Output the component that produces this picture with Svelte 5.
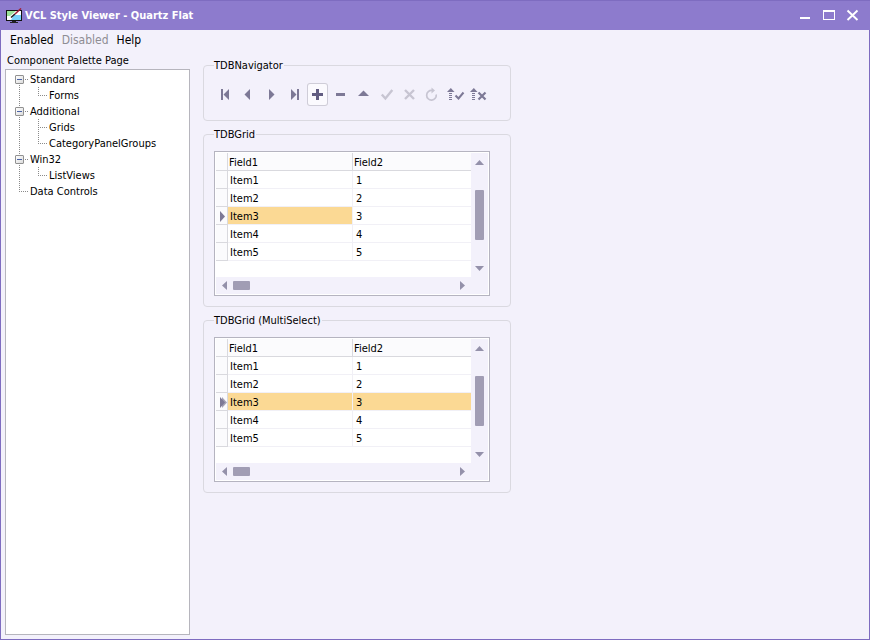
<script>
  const records = [1, 2, 3, 4, 5].map((n) => ({ name: `Item${n}`, value: n }));

  const tree = [
    { label: 'Standard', children: ['Forms'] },
    { label: 'Additional', children: ['Grids', 'CategoryPanelGroups'] },
    { label: 'Win32', children: ['ListViews'] },
    { label: 'Data Controls', children: [] }
  ];
  let collapsed = $state({});

  const grids = [
    { title: 'TDBGrid', multi: false },
    { title: 'TDBGrid (MultiSelect)', multi: true }
  ];
  let current = $state([3, 3]);

  const navButtons = [
    { id: 'first', label: 'First record' },
    { id: 'prior', label: 'Prior record' },
    { id: 'next', label: 'Next record' },
    { id: 'last', label: 'Last record' },
    { id: 'insert', label: 'Insert record' },
    { id: 'delete', label: 'Delete record' },
    { id: 'edit', label: 'Edit record' },
    { id: 'post', label: 'Post edit', disabled: true },
    { id: 'cancel', label: 'Cancel edit', disabled: true },
    { id: 'refresh', label: 'Refresh data', disabled: true },
    { id: 'apply', label: 'Apply updates' },
    { id: 'revert', label: 'Cancel updates' }
  ];
</script>

{#snippet navIcon(id)}
  <svg width="23" height="23" viewBox="0 0 23 23" fill="currentColor" aria-hidden="true">
    {#if id === 'first'}
      <path d="M7 6h2v11H7zM15 6v11l-5.500-5.500z" />
    {:else if id === 'prior'}
      <path d="M13 6v11l-5.500-5.500z" />
    {:else if id === 'next'}
      <path d="M9 6v11l5.500-5.500z" />
    {:else if id === 'last'}
      <path d="M8 6v11l5.500-5.500zM14 6h2v11h-2z" />
    {:else if id === 'insert'}
      <path d="M10 6h3v4h4v3h-4v4h-3v-4H6v-3h4z" />
    {:else if id === 'delete'}
      <path d="M7 10h9v3H7z" />
    {:else if id === 'edit'}
      <path d="M6 13h11l-5.500-5.500z" />
    {:else if id === 'post'}
      <path d="M6.800 11.500l3.600 4L17.300 7" fill="none" stroke="currentColor" stroke-width="2.400" />
    {:else if id === 'cancel'}
      <path d="M7 7l9 9M16 7l-9 9" fill="none" stroke="currentColor" stroke-width="2.400" />
    {:else if id === 'refresh'}
      <path d="M11 7.500a4.800 4.800 0 1 0 4.200 4" fill="none" stroke="currentColor" stroke-width="1.700" />
      <path d="M10.500 4.500v6l3.500-3z" />
    {:else}
      <path d="M3 9h7.500L6.800 5z" />
      <path d="M5 10h3v1H5zM5 12h3v1H5zM5 14h3v1H5zM5 16h3v1H5z" />
      {#if id === 'apply'}
        <path d="M11.500 12.500l3 3 5-6" fill="none" stroke="currentColor" stroke-width="2" />
      {:else}
        <path d="M11.500 9.500l7 7M18.500 9.500l-7 7" fill="none" stroke="currentColor" stroke-width="2.200" />
      {/if}
    {/if}
  </svg>
{/snippet}

<div class="window">
  <header class="titlebar">
    <svg class="app-icon" width="17" height="16" viewBox="0 0 17 16" aria-hidden="true">
      <path d="M0 2h16v11H0z" fill="#111" />
      <path d="M1 3h14v9H1z" fill="#fff" />
      <path d="M1 3h9L4 8H1z" fill="#9be39a" />
      <path d="M8 7h7v5H5z" fill="#78d3fa" />
      <path d="M1 8h5l-2 4H1z" fill="#fff" />
      <path d="M6 13h4v1h2v1H4v-1h2z" fill="#222" />
      <path d="M5 9.500L9 6" stroke="#222" stroke-width="1.600" />
      <path d="M9 6L15 .5" stroke="#a01f35" stroke-width="1.600" />
    </svg>
    <h1>VCL Style Viewer - Quartz Flat</h1>
    <button class="caption" aria-label="Minimize">
      <svg width="24" height="24" viewBox="0 0 24 24" fill="#fff"><path d="M7 13h10v2H7z" /></svg>
    </button>
    <button class="caption" aria-label="Maximize">
      <svg width="24" height="24" viewBox="0 0 24 24" fill="#fff"><path fill-rule="evenodd" d="M6 6h12v10H6zM7 8v7h10V8z" /></svg>
    </button>
    <button class="caption" aria-label="Close">
      <svg width="24" height="24" viewBox="0 0 24 24" fill="none" stroke="#fff" stroke-width="1.900"><path d="M6.500 6.500l10 9.500M16.500 6.500l-10 9.500" /></svg>
    </button>
  </header>

  <nav class="menu" aria-label="Main menu">
    <button>Enabled</button>
    <button disabled>Disabled</button>
    <button>Help</button>
  </nav>

  <div class="content">
    <aside>
      <h2 id="palette">Component Palette Page</h2>
      <ul class="tree" aria-labelledby="palette">
        {#each tree as node}
          <li class="root">
            <div class="row">
              {#if node.children.length}
                <button
                  class="toggle"
                  class:plus={collapsed[node.label]}
                  aria-label="Toggle {node.label}"
                  aria-expanded={!collapsed[node.label]}
                  onclick={() => (collapsed[node.label] = !collapsed[node.label])}
                ></button>
              {/if}
              <span>{node.label}</span>
            </div>
            {#if node.children.length && !collapsed[node.label]}
              <ul>
                {#each node.children as child}
                  <li class="leaf"><div class="row"><span>{child}</span></div></li>
                {/each}
              </ul>
            {/if}
          </li>
        {/each}
      </ul>
    </aside>

    <main>
      <fieldset>
        <legend>TDBNavigator</legend>
        <div class="navigator">
          {#each navButtons as b}
            <button class:hot={b.id === 'insert'} disabled={b.disabled} aria-label={b.label}>
              {@render navIcon(b.id)}
            </button>
          {/each}
        </div>
      </fieldset>

      {#each grids as grid, g}
        <fieldset>
          <legend>{grid.title}</legend>
          <div class="grid">
            <div class="view">
              <table class:multi={grid.multi}>
                <thead>
                  <tr><th class="mark"></th><th class="name">Field1</th><th>Field2</th></tr>
                </thead>
                <tbody>
                  {#each records as r}
                    <tr class:current={current[g] === r.value} onclick={() => (current[g] = r.value)}>
                      <td class="mark">
                        {#if current[g] === r.value}
                          <svg width="11" height="15" viewBox="0 0 11 15" aria-hidden="true">
                            {#if grid.multi}
                              <path d="M6 2v11l5-5.500z" fill="#a5a2b5" />
                            {/if}
                            <path d="M4 2v11l5-5.500z" fill="#7d7996" />
                          </svg>
                        {/if}
                      </td>
                      <td class="name">{r.name}</td>
                      <td>{r.value}</td>
                    </tr>
                  {/each}
                </tbody>
              </table>
            </div>
            <div class="vscroll">
              <button aria-label="Scroll up"><svg width="9" height="5" viewBox="0 0 9 5"><path d="M0 5h9L4.500 0z" /></svg></button>
              <div class="thumb"></div>
              <button aria-label="Scroll down"><svg width="9" height="5" viewBox="0 0 9 5"><path d="M0 0h9L4.500 5z" /></svg></button>
            </div>
            <div class="hscroll">
              <button aria-label="Scroll left"><svg width="5" height="9" viewBox="0 0 5 9"><path d="M5 0v9L0 4.500z" /></svg></button>
              <div class="thumb"></div>
              <button aria-label="Scroll right"><svg width="5" height="9" viewBox="0 0 5 9"><path d="M0 0v9l5-4.500z" /></svg></button>
            </div>
          </div>
        </fieldset>
      {/each}
    </main>
  </div>
</div>

<style>
  :global(body) {
    background: #f3f1fb;
  }
  .window {
    box-sizing: border-box;
    min-height: 100vh;
    display: flex;
    flex-direction: column;
    border: 1px solid #7e6cc0;
    border-top: 0;
    background: #f3f1fb;
    color: #000;
    font: 11px/14px Tahoma, 'DejaVu Sans Condensed', sans-serif;
  }
  button {
    margin: 0;
    padding: 0;
    border: 0;
    background: none;
    color: inherit;
    font: inherit;
  }
  svg {
    display: block;
  }
  h1,
  h2 {
    margin: 0;
    font-size: inherit;
  }
  ul {
    margin: 0;
    padding: 0;
    list-style: none;
  }

  .titlebar {
    box-sizing: border-box;
    height: 30px;
    margin: 0 -1px;
    padding: 0 5px 0 6px;
    display: flex;
    align-items: center;
    border-top: 1px solid #7e6cc0;
    background: #8d7bcd;
    color: #fff;
  }
  .titlebar h1 {
    flex: 1;
    margin-left: 2px;
    font-weight: bold;
  }
  .caption {
    width: 24px;
    height: 24px;
  }

  .menu {
    display: flex;
    gap: 8px;
    padding: 3px 9px 0;
    font-size: 12px;
    line-height: 14px;
  }
  .menu button:disabled {
    color: #8e8d93;
  }

  .content {
    flex: 1;
    display: flex;
    gap: 13px;
    padding: 0 4px 4px;
  }
  aside {
    width: 185px;
    display: flex;
    flex-direction: column;
  }
  h2 {
    padding: 7px 2px 1px;
    font-weight: normal;
  }
  .tree {
    flex: 1;
    padding: 1px 9px;
    border: 1px solid #b6b5bd;
    background: #fff;
  }
  .row {
    height: 16px;
    display: flex;
    align-items: center;
  }
  .row span {
    padding-top: 2px;
  }
  .root,
  .leaf {
    --dot: #8a8a8a;
    background-image: repeating-linear-gradient(to bottom, var(--dot) 0 1px, transparent 1px 2px),
      repeating-linear-gradient(to right, var(--dot) 0 1px, transparent 1px 2px);
    background-repeat: no-repeat;
    background-size: 1px 100%, 9px 1px;
    background-position: 4px 0, 4px 8px;
  }
  .root:first-child {
    background-position: 4px 8px, 4px 8px;
  }
  .root:last-child,
  .leaf:last-child {
    background-size: 1px 9px, 9px 1px;
  }
  .root > .row {
    gap: 6px;
  }
  .root > .row > span:only-child,
  .leaf span {
    margin-left: 15px;
  }
  .leaf {
    margin-left: 19px;
  }
  .toggle {
    box-sizing: border-box;
    width: 9px;
    height: 9px;
    border: 1px solid #919191;
    border-radius: 1px;
    background: linear-gradient(#4b63a7, #4b63a7) center / 5px 1px no-repeat,
      linear-gradient(135deg, #fff, #dcdcdc);
  }
  .toggle.plus {
    background: linear-gradient(#4b63a7, #4b63a7) center / 5px 1px no-repeat,
      linear-gradient(#4b63a7, #4b63a7) center / 1px 5px no-repeat,
      linear-gradient(135deg, #fff, #dcdcdc);
  }

  main {
    display: flex;
    flex-direction: column;
    align-items: flex-start;
    gap: 5px;
    padding-top: 10px;
  }
  fieldset {
    min-width: 0;
    margin: 0;
    padding: 9px 20px 10px 10px;
    border: 1px solid #dad9e0;
    border-radius: 4px;
  }
  legend {
    padding: 2px 1px 0 0;
  }
  .navigator {
    display: flex;
    padding: 1px 0 4px;
    color: #7d7996;
  }
  .navigator button {
    width: 21px;
    height: 23px;
    margin: 0 1px;
  }
  .navigator svg {
    margin: 0 -1px;
  }
  .navigator button:disabled {
    color: #c7c5d2;
  }
  .navigator .hot {
    border-radius: 3px;
    box-shadow: inset 0 0 0 1px #cfcdd8;
    background: #fbfafe;
    color: #625d82;
  }

  .grid {
    display: grid;
    grid-template-columns: 255px 17px;
    grid-template-rows: 124px 17px;
    padding: 1px;
    border: 1px solid #b5b4c0;
    background: #fff;
  }
  table {
    width: 100%;
    table-layout: fixed;
    border-collapse: separate;
    border-spacing: 0;
  }
  th,
  td {
    box-sizing: border-box;
    height: 18px;
    padding: 2px 3px 0;
    border-bottom: 1px solid #f1f0f6;
    border-right: 1px solid #f1f0f6;
    font-weight: normal;
    line-height: 14px;
    text-align: left;
  }
  th:last-child,
  td:last-child {
    border-right: 0;
  }
  td.name {
    padding-left: 2px;
  }
  th {
    padding: 2px 1px 0;
    border-color: #d9d9de;
    background: #fbfbfd;
  }
  .mark {
    width: 12px;
    padding: 2px 0 0;
    border-color: #d9d9de;
    background: #fbfbfd;
  }
  .name {
    width: 125px;
  }
  .current .name,
  .multi .current td:last-child {
    background: #fbd994;
  }
  .vscroll,
  .hscroll {
    display: flex;
    align-items: center;
    background: #f3f1fb;
    fill: #9491aa;
  }
  .vscroll {
    flex-direction: column;
    padding: 7px 0 6px;
  }
  .vscroll button:last-child {
    margin-top: auto;
  }
  .hscroll {
    grid-column: 1 / 3;
    padding: 0 23px 0 6px;
  }
  .hscroll button:last-child {
    margin-left: auto;
  }
  .thumb {
    border-radius: 1px;
    background: #a19db4;
  }
  .vscroll .thumb {
    width: 9px;
    height: 50px;
    margin-top: 25px;
  }
  .hscroll .thumb {
    width: 17px;
    height: 9px;
    margin-left: 6px;
  }
</style>
